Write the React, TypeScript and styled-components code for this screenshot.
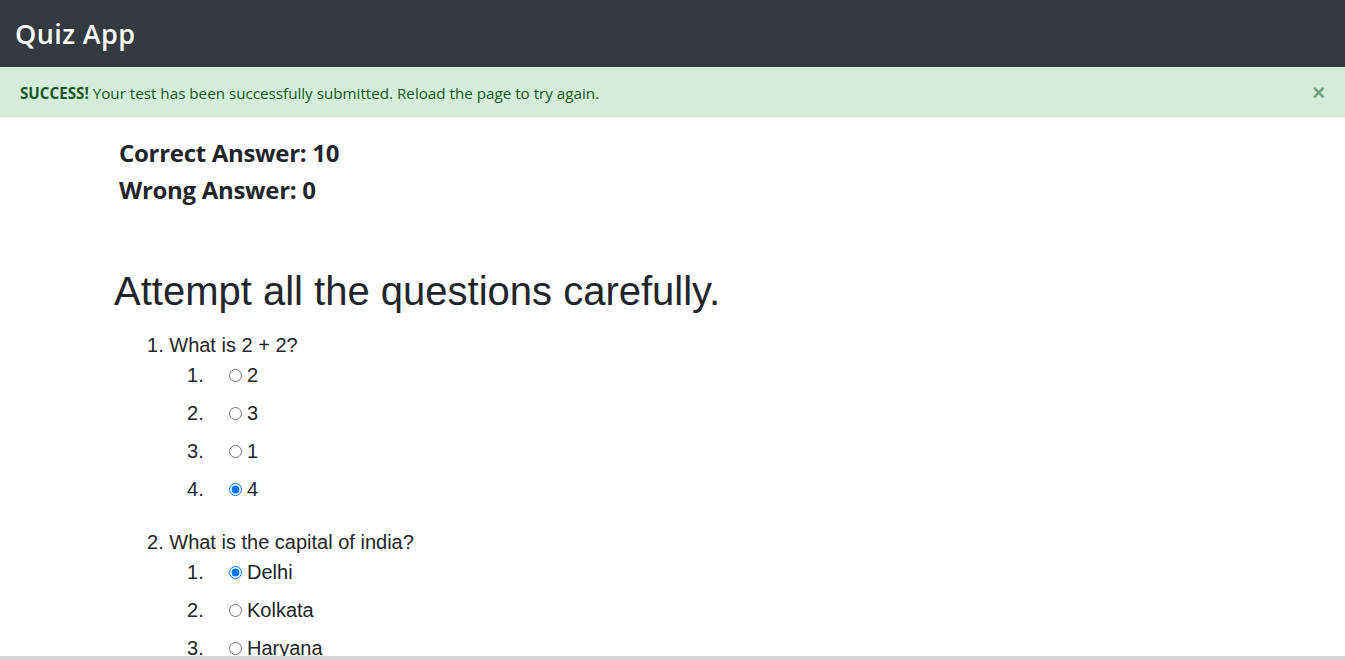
import React from "react";
import styled, { createGlobalStyle } from "styled-components";

const Global = createGlobalStyle`
  html, body { margin: 0; padding: 0; background: #fff; }
  body { font-family: "Liberation Sans", Arial, sans-serif; color: #212529; }
  * { box-sizing: border-box; }
`;

const NavBar = styled.header`
  height: 67px;
  background: #343a40;
  display: flex;
  align-items: center;
  padding-left: 15px;
`;

const Brand = styled.div`
  font-family: "Comic Sans MS", "Open Sans", sans-serif;
  font-weight: 600;
  font-size: 27px;
  color: #fff;
  letter-spacing: 0.4px;
`;

const Alert = styled.div`
  height: 50px;
  background: #d4edda;
  border-bottom: 1px solid #c3e6cb;
  color: #155724;
  display: flex;
  align-items: center;
  justify-content: space-between;
  padding: 3px 20px 0 20px;
  font-family: "Open Sans", "Segoe UI", sans-serif;
  font-size: 15.2px;
`;

const AlertText = styled.div`
  strong { font-weight: 700; }
`;

const Close = styled.button`
  border: 0;
  background: transparent;
  color: #155724;
  opacity: 0.5;
  font-size: 22px;
  font-weight: 700;
  line-height: 1;
  padding: 0;
  font-family: "Liberation Sans", Arial, sans-serif;
`;

const Container = styled.main`
  padding-left: 114px;
`;

const Scores = styled.div`
  padding: 17px 0 0 5px;
`;

const Score = styled.h4`
  margin: 0;
  font-family: "Open Sans", "Segoe UI", sans-serif;
  font-weight: 700;
  font-size: 24px;
  line-height: 37px;
  letter-spacing: -0.3px;
  color: #212529;
`;

const Heading = styled.h1`
  margin: 59px 0 0;
  font-family: "Liberation Sans", Arial, sans-serif;
  font-weight: 400;
  font-size: 40px;
  line-height: 48px;
  color: #212529;
`;

const QuestionList = styled.ol`
  list-style: none;
  margin: 19px 0 0;
  padding: 0 0 0 33px;
`;

const Question = styled.li`
  margin-bottom: 23px;
`;

const QuestionText = styled.div`
  font-size: 20px;
  line-height: 22px;
`;

const Options = styled.ol`
  list-style: none;
  margin: 0;
  padding: 0 0 0 40px;
`;

const Option = styled.li`
  display: flex;
  align-items: center;
  height: 38px;
  font-size: 20px;
`;

const Num = styled.span`
  width: 40px;
`;

const Radio = styled.input`
  margin: 1px 5px 0 2px;
  width: 13px;
  height: 13px;
`;

const ScrollStrip = styled.div`
  position: fixed;
  left: 0;
  right: 0;
  bottom: 0;
  height: 4px;
  background: #d4d4d4;
`;

type Q = { text: string; options: string[]; selected: number };

const questions: Q[] = [
  { text: "What is 2 + 2?", options: ["2", "3", "1", "4"], selected: 3 },
  { text: "What is the capital of india?", options: ["Delhi", "Kolkata", "Haryana", "Mumbai"], selected: 0 },
];

export default function App() {
  return (
    <>
      <Global />
      <NavBar>
        <Brand>Quiz App</Brand>
      </NavBar>
      <Alert>
        <AlertText>
          <strong>SUCCESS!</strong> Your test has been successfully submitted. Reload the page to try again.
        </AlertText>
        <Close aria-label="Close">×</Close>
      </Alert>
      <Container>
        <Scores>
          <Score>Correct Answer: 10</Score>
          <Score>Wrong Answer: 0</Score>
        </Scores>
        <Heading>Attempt all the questions carefully.</Heading>
        <QuestionList>
          {questions.map((q, qi) => (
            <Question key={qi}>
              <QuestionText>
                {qi + 1}. {q.text}
              </QuestionText>
              <Options>
                {q.options.map((o, oi) => (
                  <Option key={oi}>
                    <Num>{oi + 1}.</Num>
                    <Radio type="radio" name={`q${qi}`} checked={oi === q.selected} readOnly />
                    {o}
                  </Option>
                ))}
              </Options>
            </Question>
          ))}
        </QuestionList>
      </Container>
      <ScrollStrip />
    </>
  );
}
